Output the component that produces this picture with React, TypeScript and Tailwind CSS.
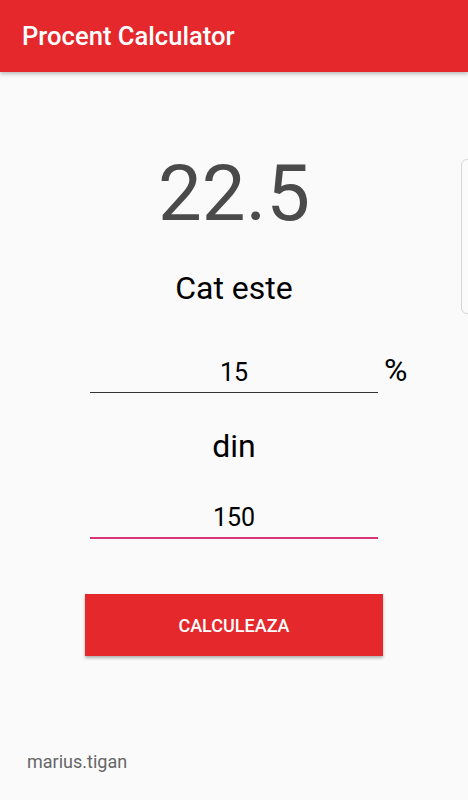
export default function App() {
  return (
    <div
      className="relative flex h-[800px] w-[468px] flex-col overflow-hidden bg-[#fafafa]"
      style={{ fontFamily: "Roboto, 'Liberation Sans', sans-serif" }}
    >
      <header className="z-10 flex h-[72px] shrink-0 items-center bg-[#e5282c] px-[22px] shadow-[0_2px_4px_rgba(0,0,0,0.25)]">
        <h1 className="text-[25.6px] font-medium text-white">Procent Calculator</h1>
      </header>

      <main className="flex flex-1 flex-col items-center">
        <div className="mt-[72px] text-[78px] leading-[100px] text-[#4a4a4a]">22.5</div>
        <div className="mt-[24px] text-[32px] leading-[40px] text-black">Cat este</div>

        <div className="mt-[42px] flex w-full items-end pl-[90px]">
          <div className="w-[288px] border-b border-[#333] pb-[4px] text-center text-[25px] leading-[30px] text-black">
            15
          </div>
          <span className="mb-[3px] ml-[6px] text-[32px] leading-[40px] text-black">%</span>
        </div>

        <div className="mt-[33px] text-[32px] leading-[40px] text-black">din</div>

        <div className="mt-[37px] w-[288px] border-b-2 border-[#d9337a] pb-[4px] text-center text-[25px] leading-[30px] text-black">
          150
        </div>

        <button className="mt-[55px] h-[62px] w-[298px] bg-[#e5282c] text-[18px] font-medium text-white shadow-[0_2px_3px_rgba(0,0,0,0.3)]">
          CALCULEAZA
        </button>
      </main>

      <footer className="px-[27px] pb-[25px] text-[18px] text-[#666]">marius.tigan</footer>

      <div className="absolute right-[-8px] top-[159px] h-[155px] w-[15px] rounded-[6px] border border-[#d6d6d6] bg-[#fbfbfb]" />
    </div>
  );
}
